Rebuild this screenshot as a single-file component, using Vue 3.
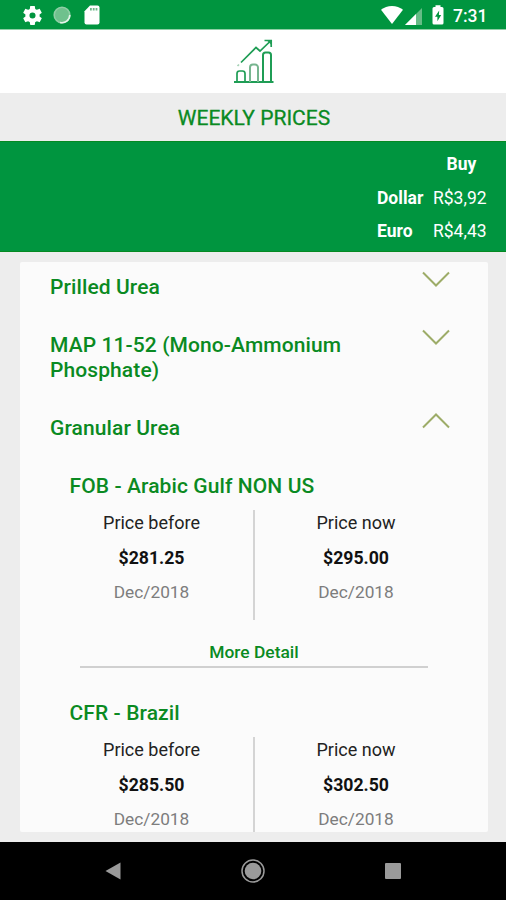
<script setup>
import { ref } from 'vue';

// Exchange rates shown in the green band
const rates = [
  { name: 'Dollar', buy: 'R$3,92' },
  { name: 'Euro', buy: 'R$4,43' },
];

// Product groups, each with its quotes
const products = ref([
  { name: 'Prilled Urea', open: false, quotes: [] },
  { name: 'MAP 11-52 (Mono-Ammonium Phosphate)', open: false, quotes: [] },
  {
    name: 'Granular Urea',
    open: true,
    quotes: [
      {
        name: 'FOB - Arabic Gulf NON US',
        hasDetail: true,
        prices: [
          { label: 'Price before', value: '$281.25', date: 'Dec/2018' },
          { label: 'Price now', value: '$295.00', date: 'Dec/2018' },
        ],
      },
      {
        name: 'CFR - Brazil',
        hasDetail: false,
        prices: [
          { label: 'Price before', value: '$285.50', date: 'Dec/2018' },
          { label: 'Price now', value: '$302.50', date: 'Dec/2018' },
        ],
      },
    ],
  },
]);

const toggle = (product) => {
  product.open = !product.open;
};
</script>

<template>
  <div class="screen">
    <div class="status-bar">
      <div class="status-left">
        <svg class="gear" viewBox="2 2 20 20" width="19" height="19">
          <path fill="#fff" d="M19.43 12.98c.04-.32.07-.64.07-.98s-.03-.66-.07-.98l2.11-1.65c.19-.15.24-.42.12-.64l-2-3.46c-.12-.22-.39-.3-.61-.22l-2.49 1c-.52-.4-1.08-.73-1.69-.98l-.38-2.65C14.46 2.18 14.25 2 14 2h-4c-.25 0-.46.18-.49.42l-.38 2.65c-.61.25-1.17.59-1.69.98l-2.49-1c-.23-.09-.49 0-.61.22l-2 3.46c-.13.22-.07.49.12.64l2.11 1.65c-.04.32-.07.65-.07.98s.03.66.07.98l-2.11 1.65c-.19.15-.24.42-.12.64l2 3.46c.12.22.39.3.61.22l2.49-1c.52.4 1.08.73 1.69.98l.38 2.65c.03.24.24.42.49.42h4c.25 0 .46-.18.49-.42l.38-2.65c.61-.25 1.17-.59 1.69-.98l2.49 1c.23.09.49 0 .61-.22l2-3.46c.12-.22.07-.49-.12-.64l-2.11-1.65zM12 15.2a3.2 3.2 0 1 1 0-6.4 3.2 3.2 0 0 1 0 6.4z" />
        </svg>
        <svg class="sync" viewBox="0 0 18 18" width="18" height="18">
          <circle cx="9" cy="9" r="7.8" fill="#6fc18d" stroke="#8fcea5" stroke-width="1.6" />
          <path d="M16.8 9A7.8 7.8 0 0 1 7 16.5" fill="none" stroke="#e4f4e9" stroke-width="1.6" />
        </svg>
        <svg class="sd-card" viewBox="0 0 16 20" width="16" height="20">
          <path fill="#fff" d="M6 .5h7.5a2 2 0 0 1 2 2v15a2 2 0 0 1-2 2h-11a2 2 0 0 1-2-2V6.2z" />
          <path fill="#6fb98a" d="M6 3h1.8v2.5H6zM8.8 3h1.8v2.5H8.8zM11.6 3h1.8v2.5h-1.8z" />
        </svg>
      </div>
      <div class="status-right">
        <svg class="wifi" viewBox="0 0 22 18" width="22" height="18">
          <path fill="#fff" d="M0 3.8C3 1.5 6.8 0 11 0s8 1.5 11 3.8L11 18z" />
        </svg>
        <svg class="signal" viewBox="0 0 17 17" width="17" height="17">
          <path fill="#66bc86" d="M17 0v17H0z" />
          <path fill="#fff" d="M11 6v11H0z" />
        </svg>
        <svg class="battery" viewBox="0 0 12 20" width="12" height="20">
          <path fill="#fff" fill-rule="evenodd" d="M3.5 2V.3h5V2H10a1.5 1.5 0 0 1 1.5 1.5V18a1.5 1.5 0 0 1-1.5 1.5H2A1.5 1.5 0 0 1 .5 18V3.5A1.5 1.5 0 0 1 2 2zM7.2 5.5 3 11.8h2.4v4.4L9.2 10H6.9z" />
        </svg>
        <span class="clock">7:31</span>
      </div>
    </div>

    <header class="logo-bar">
      <svg viewBox="0 0 42 46" width="42" height="46" fill="none" stroke="#1f9d55" stroke-width="1.7">
        <path stroke-width="2" d="M1 43h39.5" />
        <path d="M4 43V34.5a2.5 2.5 0 0 1 2.5-2.5h3a2.5 2.5 0 0 1 2.5 2.5V43" />
        <path stroke="#77b58f" stroke-width="2" d="M17 43V28.5a3 3 0 0 1 3-3h2a3 3 0 0 1 3 3V43" />
        <path stroke-width="2" d="M30 43V16a2.500 2.500 0 0 1 2.500-2.500h3A2.500 2.500 0 0 1 38 16v27" />
        <path d="M8 23.5 23 8.500l4 3.500L37.500 2M31.500 1.500h6.700V8" />
        <path fill="#1f9d55" stroke="none" d="M33.500 1h5v5z" />
        <path stroke="#a5d1b5" d="M4.500 27 6 25.500" />
      </svg>
    </header>

    <h1 class="page-title">WEEKLY PRICES</h1>

    <section class="rates">
      <div class="rate-row">
        <span></span>
        <b class="rate-head">Buy</b>
      </div>
      <div v-for="rate in rates" :key="rate.name" class="rate-row">
        <b>{{ rate.name }}</b>
        <span>{{ rate.buy }}</span>
      </div>
    </section>

    <main class="content">
      <div class="card">
        <section v-for="product in products" :key="product.name" class="product">
          <div class="product-head" @click="toggle(product)">
            <h2 class="product-name">{{ product.name }}</h2>
            <svg class="chevron" :class="{ up: product.open }" viewBox="0 0 28 16" width="28" height="16">
              <path d="M1 1.5 14 14.5 27 1.5" fill="none" stroke="#9dac68" stroke-width="2" />
            </svg>
          </div>
          <template v-if="product.open">
            <article v-for="quote in product.quotes" :key="quote.name" class="quote">
              <h3 class="quote-name">{{ quote.name }}</h3>
              <div class="prices">
                <div v-for="price in quote.prices" :key="price.label" class="price">
                  <span class="price-label">{{ price.label }}</span>
                  <b class="price-value">{{ price.value }}</b>
                  <span class="price-date">{{ price.date }}</span>
                </div>
              </div>
              <div v-if="quote.hasDetail" class="more">More Detail</div>
            </article>
          </template>
        </section>
      </div>
    </main>

    <nav class="nav-bar">
      <svg viewBox="0 0 16 18" width="16" height="18">
        <path fill="#9a9a9a" d="M15.5.5v17L.5 9z" />
      </svg>
      <svg viewBox="0 0 24 24" width="24" height="24">
        <circle cx="12" cy="12" r="11" fill="none" stroke="#9a9a9a" stroke-width="1.5" />
        <circle cx="12" cy="12" r="8.3" fill="#9a9a9a" />
      </svg>
      <svg viewBox="0 0 16 16" width="16" height="16">
        <rect width="16" height="16" rx="1" fill="#9a9a9a" />
      </svg>
    </nav>
  </div>
</template>

<style>
body {
  margin: 0;
}
</style>

<style scoped>
.screen {
  width: 506px;
  height: 900px;
  display: flex;
  flex-direction: column;
  overflow: hidden;
  background: #ededed;
  font-family: Roboto, sans-serif;
}

.status-bar {
  flex: none;
  box-sizing: border-box;
  height: 30px;
  padding: 1px 19px 0 23px;
  display: flex;
  justify-content: space-between;
  align-items: center;
  background: #00953f;
  border-bottom: 1px solid #8fcfa5;
}

.status-left,
.status-right {
  display: flex;
  align-items: center;
}

.sync {
  margin-left: 11px;
}

.sd-card {
  margin-left: 13px;
}

.signal {
  margin: 2px 10px 0 2px;
}

.clock {
  margin: 2px 0 0 9px;
  width: 34px;
  color: #fff;
  font-size: 17.5px;
  font-weight: 500;
  line-height: 20px;
  white-space: nowrap;
}

.logo-bar {
  flex: none;
  box-sizing: border-box;
  height: 63px;
  padding: 1px 0 0 2px;
  display: flex;
  justify-content: center;
  align-items: center;
  background: #fff;
}

.page-title {
  flex: none;
  box-sizing: border-box;
  height: 48px;
  margin: 0;
  padding: 1px 0 0 2px;
  color: #0a8a22;
  font-size: 21px;
  font-weight: 400;
  line-height: 49px;
  text-align: center;
  -webkit-text-stroke: 0.3px #0a8a22;
}

.rates {
  flex: none;
  box-sizing: border-box;
  height: 111px;
  padding: 6px 18px 0 0;
  background: #00953f;
  border-top: 1px solid #058a22;
  border-bottom: 1px solid #058a22;
  color: #fff;
  font-size: 17.5px;
}

.rate-row {
  display: grid;
  grid-template-columns: 56px 55px;
  justify-content: end;
  line-height: 33.5px;
  white-space: nowrap;
}

.rate-head {
  padding-left: 2px;
  text-align: center;
}

.content {
  flex: none;
  box-sizing: border-box;
  height: 590px;
  padding: 10px 18px 10px 20px;
}

.card {
  box-sizing: border-box;
  height: 570px;
  padding: 0 30px;
  overflow: hidden;
  background: #fbfbfb;
  border-radius: 2px;
}

.product-head {
  display: flex;
  justify-content: space-between;
  padding: 13px 8px 20px 0;
}

.product-name,
.quote-name {
  color: #0a8a22;
  font-size: 21px;
  font-weight: 500;
  line-height: 25px;
  letter-spacing: 0.1px;
}

.product-name {
  width: 320px;
  margin: 0;
}

.chevron {
  margin-top: -4px;
}

.chevron.up {
  margin-top: -3px;
  transform: rotate(180deg);
}

.quote {
  padding-top: 13px;
  margin-bottom: 20px;
}

.quote-name {
  margin: 0 0 11px;
  padding-left: 19.5px;
}

.prices {
  display: grid;
  grid-template-columns: 203px 204px;
  height: 110px;
}

.price {
  display: flex;
  flex-direction: column;
  align-items: center;
  font-size: 17.3px;
  line-height: 34.5px;
}

/* Pull the text up while the divider keeps the full row height */
.price > :first-child {
  margin-top: -4px;
}

.price + .price {
  border-left: 2px solid #d4d4d4;
}

.price-label {
  color: #222;
  font-size: 18px;
}

.price-value {
  color: #111;
  font-size: 17.7px;
}

.price-date {
  color: #7d7d7d;
}

.more {
  margin: 19px 30px 0;
  padding-bottom: 1px;
  border-bottom: 2px solid #d0d0d0;
  color: #0a8a22;
  font-size: 17.4px;
  font-weight: 500;
  line-height: 26px;
  text-align: center;
}

.nav-bar {
  flex: none;
  height: 58px;
  padding: 0 105px;
  display: flex;
  justify-content: space-between;
  align-items: center;
  background: #000;
}
</style>
